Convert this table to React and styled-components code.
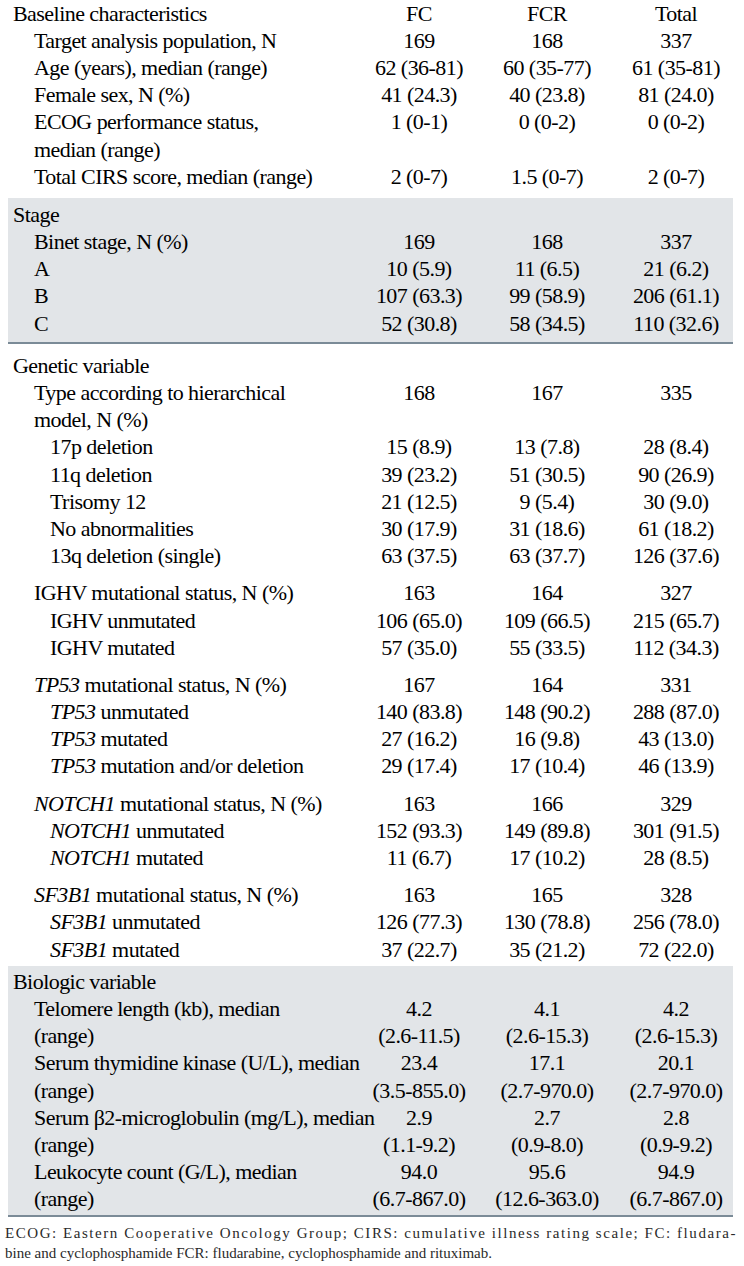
import React from "react";
import styled, { createGlobalStyle } from "styled-components";

const GlobalStyle = createGlobalStyle`
  html, body {
    margin: 0;
    padding: 0;
    background: #ffffff;
  }
  body {
    font-family: "Liberation Serif", "Times New Roman", serif;
    color: #000000;
  }
`;

const Page = styled.div`
  width: 744px;
  padding: 0 0 0 8px;
  box-sizing: border-box;
`;

const Table = styled.div`
  width: 725px;
  display: flex;
  flex-direction: column;
`;

/* one band of the table: plain or shaded with a rule underneath */
const Section = styled.section`
  display: flex;
  flex-direction: column;
  padding: ${(p) => p.$pad || "0"};
  margin-top: ${(p) => p.$top || "0"};
  background: ${(p) => (p.$shaded ? "#e2e5e8" : "transparent")};
  border-bottom: ${(p) => (p.$rule ? "2px solid #7b8b97" : "none")};
`;

const Group = styled.div`
  display: flex;
  flex-direction: column;
  & + & {
    margin-top: 10px;
  }
`;

const Row = styled.div`
  display: grid;
  grid-template-columns: 347px 128px 128px 122px;
  height: 27.2px;
  align-items: center;
  font-size: 22px;
  letter-spacing: -0.55px;
  white-space: nowrap;
`;

const Label = styled.div`
  padding-left: ${(p) => [5, 26, 42][p.$level || 0]}px;
  overflow: visible;
  i {
    font-style: italic;
  }
`;

const Cell = styled.div`
  text-align: center;
  padding-left: ${(p) => (p.$last ? "8px" : "0")};
`;

const Note = styled.footer`
  width: 733px;
  margin: 6px 0 0 -3px;
  font-size: 15px;
  line-height: 20px;
  color: #2a2a2a;
`;

const NoteLine = styled.div`
  letter-spacing: ${(p) => p.$spread || "0"};
  white-space: nowrap;
`;

const baseline = [
  [0, "Baseline characteristics", "FC", "FCR", "Total"],
  [1, "Target analysis population, N", "169", "168", "337"],
  [1, "Age (years), median (range)", "62 (36-81)", "60 (35-77)", "61 (35-81)"],
  [1, "Female sex, N (%)", "41 (24.3)", "40 (23.8)", "81 (24.0)"],
  [1, "ECOG performance status,", "1 (0-1)", "0 (0-2)", "0 (0-2)"],
  [1, "median (range)"],
  [1, "Total CIRS score, median (range)", "2 (0-7)", "1.5 (0-7)", "2 (0-7)"],
];

const stage = [
  [0, "Stage"],
  [1, "Binet stage, N (%)", "169", "168", "337"],
  [1, "A", "10 (5.9)", "11 (6.5)", "21 (6.2)"],
  [1, "B", "107 (63.3)", "99 (58.9)", "206 (61.1)"],
  [1, "C", "52 (30.8)", "58 (34.5)", "110 (32.6)"],
];

const gene = (name, rest) => (
  <>
    <i>{name}</i> {rest}
  </>
);

const genetic = [
  [
    [0, "Genetic variable"],
    [1, "Type according to hierarchical", "168", "167", "335"],
    [1, "model, N (%)"],
    [2, "17p deletion", "15 (8.9)", "13 (7.8)", "28 (8.4)"],
    [2, "11q deletion", "39 (23.2)", "51 (30.5)", "90 (26.9)"],
    [2, "Trisomy 12", "21 (12.5)", "9 (5.4)", "30 (9.0)"],
    [2, "No abnormalities", "30 (17.9)", "31 (18.6)", "61 (18.2)"],
    [2, "13q deletion (single)", "63 (37.5)", "63 (37.7)", "126 (37.6)"],
  ],
  [
    [1, "IGHV mutational status, N (%)", "163", "164", "327"],
    [2, "IGHV unmutated", "106 (65.0)", "109 (66.5)", "215 (65.7)"],
    [2, "IGHV mutated", "57 (35.0)", "55 (33.5)", "112 (34.3)"],
  ],
  [
    [1, gene("TP53", "mutational status, N (%)"), "167", "164", "331"],
    [2, gene("TP53", "unmutated"), "140 (83.8)", "148 (90.2)", "288 (87.0)"],
    [2, gene("TP53", "mutated"), "27 (16.2)", "16 (9.8)", "43 (13.0)"],
    [2, gene("TP53", "mutation and/or deletion"), "29 (17.4)", "17 (10.4)", "46 (13.9)"],
  ],
  [
    [1, gene("NOTCH1", "mutational status, N (%)"), "163", "166", "329"],
    [2, gene("NOTCH1", "unmutated"), "152 (93.3)", "149 (89.8)", "301 (91.5)"],
    [2, gene("NOTCH1", "mutated"), "11 (6.7)", "17 (10.2)", "28 (8.5)"],
  ],
  [
    [1, gene("SF3B1", "mutational status, N (%)"), "163", "165", "328"],
    [2, gene("SF3B1", "unmutated"), "126 (77.3)", "130 (78.8)", "256 (78.0)"],
    [2, gene("SF3B1", "mutated"), "37 (22.7)", "35 (21.2)", "72 (22.0)"],
  ],
];

const biologic = [
  [0, "Biologic variable"],
  [1, "Telomere length (kb), median", "4.2", "4.1", "4.2"],
  [1, "(range)", "(2.6-11.5)", "(2.6-15.3)", "(2.6-15.3)"],
  [1, "Serum thymidine kinase (U/L), median", "23.4", "17.1", "20.1"],
  [1, "(range)", "(3.5-855.0)", "(2.7-970.0)", "(2.7-970.0)"],
  [1, "Serum β2-microglobulin (mg/L), median", "2.9", "2.7", "2.8"],
  [1, "(range)", "(1.1-9.2)", "(0.9-8.0)", "(0.9-9.2)"],
  [1, "Leukocyte count (G/L), median", "94.0", "95.6", "94.9"],
  [1, "(range)", "(6.7-867.0)", "(12.6-363.0)", "(6.7-867.0)"],
];

const Rows = ({ rows }) =>
  rows.map(([level, label, fc, fcr, total], i) => (
    <Row key={i}>
      <Label $level={level}>{label}</Label>
      <Cell>{fc}</Cell>
      <Cell>{fcr}</Cell>
      <Cell $last>{total}</Cell>
    </Row>
  ));

const App = () => {
  return (
    <Page>
      <GlobalStyle />
      <Table>
        <Section>
          <Rows rows={baseline} />
        </Section>
        <Section $shaded $rule $top="8px" $pad="3px 0 5px 0">
          <Rows rows={stage} />
        </Section>
        <Section $pad="8px 0 3px 0">
          {genetic.map((g, i) => (
            <Group key={i}>
              <Rows rows={g} />
            </Group>
          ))}
        </Section>
        <Section $shaded $rule $pad="2px 0 2px 0">
          <Rows rows={biologic} />
        </Section>
      </Table>
      <Note>
        <NoteLine $spread="1.55px">
          ECOG: Eastern Cooperative Oncology Group; CIRS: cumulative illness rating scale; FC: fludara-
        </NoteLine>
        <NoteLine>
          bine and cyclophosphamide FCR: fludarabine, cyclophosphamide and rituximab.
        </NoteLine>
      </Note>
    </Page>
  );
};

export default App;
